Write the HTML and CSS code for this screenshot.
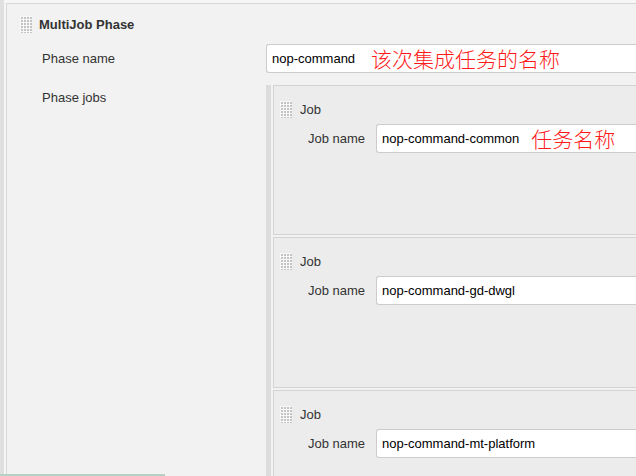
FILE: index.html
```html
<!DOCTYPE html>
<html>
<head>
<meta charset="utf-8">
<link rel="stylesheet" href="styles.css">
</head>
<body>
<div class="page">
  <div class="rail"></div>
  <div class="panel">
    <div class="section-head">
      <span class="grip"></span>
      <span class="section-title">MultiJob Phase</span>
    </div>
    <div class="row">
      <div class="label">Phase name</div>
      <div class="field">nop-command<span class="note note-phase">该次集成任务的名称</span></div>
    </div>
    <div class="row jobs-row">
      <div class="label label-top">Phase jobs</div>
      <div class="jobs">
        <div class="job">
          <div class="job-head"><span class="grip"></span><span class="job-title">Job</span></div>
          <div class="job-row">
            <div class="job-label">Job name</div>
            <div class="field">nop-command-common<span class="note note-job">任务名称</span></div>
          </div>
        </div>
        <div class="job">
          <div class="job-head"><span class="grip"></span><span class="job-title">Job</span></div>
          <div class="job-row">
            <div class="job-label">Job name</div>
            <div class="field">nop-command-gd-dwgl</div>
          </div>
        </div>
        <div class="job">
          <div class="job-head"><span class="grip"></span><span class="job-title">Job</span></div>
          <div class="job-row">
            <div class="job-label">Job name</div>
            <div class="field">nop-command-mt-platform</div>
          </div>
        </div>
      </div>
    </div>
  </div>
</div>
<div class="progress"></div>
</body>
</html>
```

FILE: styles.css
```css
html, body {
  margin: 0;
  padding: 0;
  height: 100%;
  overflow: hidden;
}
body {
  background: #f6f6f6;
  font-family: "Liberation Sans", Arial, sans-serif;
  font-size: 13px;
  color: #333;
}
.page {
  display: flex;
  height: 100%;
  overflow: hidden;
}
.rail {
  width: 4px;
  flex: none;
  background: #e0e0e0;
}
.panel {
  flex: 1;
  margin-left: 2px;
  margin-top: 3px;
  border-top: 1px solid #d8d8d8;
  border-left: 1px solid #d8d8d8;
  background: #f2f2f2;
  min-width: 0;
  overflow: hidden;
}
.section-head {
  display: flex;
  align-items: center;
  padding: 12px 0 0 13px;
  height: 17px;
}
.grip {
  display: inline-block;
  width: 12px;
  height: 17px;
  flex: none;
  background-color: #c4c4c4;
  background-image:
    linear-gradient(90deg, #f8f8f8 1px, transparent 1px),
    linear-gradient(#f8f8f8 1px, transparent 1px);
  background-size: 3px 3px;
}
.section-title {
  margin-left: 7px;
  font-weight: bold;
  color: #333;
}
.row {
  display: flex;
  align-items: center;
  margin-top: 11px;
}
.label {
  width: 224px;
  padding-left: 35px;
  flex: none;
  line-height: 15px;
}
.field {
  flex: 1;
  height: 29px;
  box-sizing: border-box;
  border: 1px solid #cccccc;
  border-right: none;
  border-radius: 3px 0 0 3px;
  background: #fff;
  color: #000;
  padding-left: 5px;
  display: flex;
  align-items: center;
  white-space: nowrap;
  overflow: hidden;
  min-width: 0;
}
.note {
  color: #ff1a1a;
  font-family: "Noto Sans CJK SC", sans-serif;
  font-weight: 300;
  font-size: 21px;
  line-height: 21px;
}
.note-phase {
  margin-left: 16px;
}
.note-job {
  margin-left: 12px;
}
.jobs-row {
  align-items: flex-start;
  margin-top: 12px;
}
.label-top {
  padding-top: 5px;
}
.jobs {
  flex: 1;
  border-left: 5px solid #dcdcdc;
  padding-left: 2px;
  min-width: 0;
  height: 391px;
}
.job {
  box-sizing: border-box;
  height: 150px;
  margin-bottom: 2px;
  border: 1px solid #d3d3d3;
  border-right: none;
  background: #ececec;
  padding: 15px 0 0 6px;
}
.job + .job {
  height: 151px;
}
.job:last-child {
  height: 87px;
  border-bottom: none;
  margin-bottom: 0;
}
.job-head {
  display: flex;
  align-items: center;
  height: 17px;
}
.job-title {
  margin-left: 8px;
  color: #333;
}
.job-row {
  display: flex;
  align-items: center;
  margin-top: 6px;
}
.job-label {
  width: 68px;
  padding-left: 28px;
  flex: none;
}
.progress {
  position: fixed;
  left: 0;
  bottom: 0;
  width: 165px;
  height: 2px;
  background: #b6d2c6;
}
```
